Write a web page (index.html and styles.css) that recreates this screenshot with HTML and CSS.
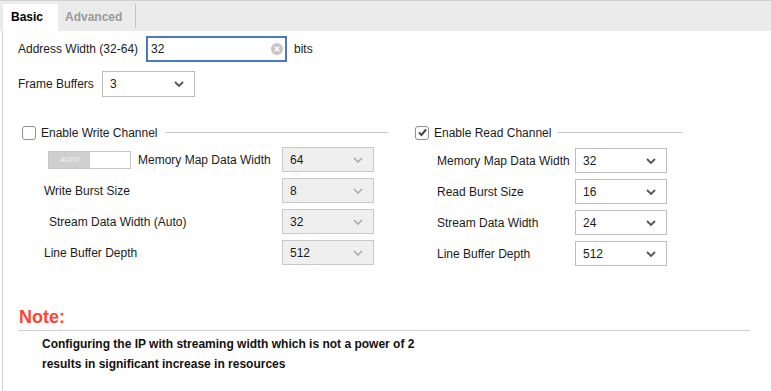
FILE: index.html
```html
<!DOCTYPE html>
<html>
<head lang="en">
    <meta charset="UTF-8">
    <title>Basic</title>
    <link rel="stylesheet" href="styles.css">
</head>
<body>
<div class="tabs">
    <div class="tab active">Basic</div>
    <div class="tab">Advanced</div>
    <span class="tab_sep"></span>
</div>
<div class="panel">
    <div class="row addr_row">
        <label class="addr_label">Address Width (32-64)</label>
        <div class="text_input">
            <span>32</span>
            <svg class="clear" width="12" height="12" viewBox="0 0 12 12">
                <circle cx="6" cy="6" r="6" fill="#c6c6c6"/>
                <path d="M3.8 3.8 L8.2 8.2 M8.2 3.8 L3.8 8.2" stroke="#fff" stroke-width="1.6"/>
            </svg>
        </div>
        <span class="unit">bits</span>
    </div>
    <div class="row fb_row">
        <label class="fb_label">Frame Buffers</label>
        <div class="select fb_select">
            <span>3</span>
            <svg class="chev" width="10" height="6" viewBox="0 0 10 6"><path d="M1 1 L5 5 L9 1" fill="none" stroke="#555" stroke-width="1.8"/></svg>
        </div>
    </div>

    <div class="channels">
        <div class="group write">
            <div class="group_head">
                <span class="check"></span>
                <span>Enable Write Channel</span>
                <span class="rule"></span>
            </div>
            <div class="fields">
                <div class="field">
                    <div class="field_label">
                        <span class="toggle"><span class="toggle_auto">AUTO</span></span>
                        Memory Map Data Width
                    </div>
                    <div class="select disabled"><span>64</span><svg class="chev" width="10" height="6" viewBox="0 0 10 6"><path d="M1 1 L5 5 L9 1" fill="none" stroke="#aaa" stroke-width="1.6"/></svg></div>
                </div>
                <div class="field">
                    <div class="field_label">Write Burst Size</div>
                    <div class="select disabled"><span>8</span><svg class="chev" width="10" height="6" viewBox="0 0 10 6"><path d="M1 1 L5 5 L9 1" fill="none" stroke="#aaa" stroke-width="1.6"/></svg></div>
                </div>
                <div class="field">
                    <div class="field_label indent">Stream Data Width (Auto)</div>
                    <div class="select disabled"><span>32</span><svg class="chev" width="10" height="6" viewBox="0 0 10 6"><path d="M1 1 L5 5 L9 1" fill="none" stroke="#aaa" stroke-width="1.6"/></svg></div>
                </div>
                <div class="field">
                    <div class="field_label">Line Buffer Depth</div>
                    <div class="select disabled"><span>512</span><svg class="chev" width="10" height="6" viewBox="0 0 10 6"><path d="M1 1 L5 5 L9 1" fill="none" stroke="#aaa" stroke-width="1.6"/></svg></div>
                </div>
            </div>
        </div>

        <div class="group read">
            <div class="group_head">
                <span class="check checked">
                    <svg width="11" height="11" viewBox="0 0 11 11"><path d="M2 5.5 L4.5 8 L9 2.5" fill="none" stroke="#444" stroke-width="2"/></svg>
                </span>
                <span>Enable Read Channel</span>
                <span class="rule"></span>
            </div>
            <div class="fields">
                <div class="field">
                    <div class="field_label">Memory Map Data Width</div>
                    <div class="select"><span>32</span><svg class="chev" width="10" height="6" viewBox="0 0 10 6"><path d="M1 1 L5 5 L9 1" fill="none" stroke="#555" stroke-width="1.8"/></svg></div>
                </div>
                <div class="field">
                    <div class="field_label">Read Burst Size</div>
                    <div class="select"><span>16</span><svg class="chev" width="10" height="6" viewBox="0 0 10 6"><path d="M1 1 L5 5 L9 1" fill="none" stroke="#555" stroke-width="1.8"/></svg></div>
                </div>
                <div class="field">
                    <div class="field_label">Stream Data Width</div>
                    <div class="select"><span>24</span><svg class="chev" width="10" height="6" viewBox="0 0 10 6"><path d="M1 1 L5 5 L9 1" fill="none" stroke="#555" stroke-width="1.8"/></svg></div>
                </div>
                <div class="field">
                    <div class="field_label">Line Buffer Depth</div>
                    <div class="select"><span>512</span><svg class="chev" width="10" height="6" viewBox="0 0 10 6"><path d="M1 1 L5 5 L9 1" fill="none" stroke="#555" stroke-width="1.8"/></svg></div>
                </div>
            </div>
        </div>
    </div>

    <div class="note">
        <h2 class="note_title">Note:</h2>
        <p class="note_text">Configuring the IP with streaming width which is not a power of 2<br>
            results in significant increase in resources</p>
    </div>
</div>
</body>
</html>
```

FILE: styles.css
```css
 *{
     margin: 0;
     padding: 0;
     box-sizing: border-box;
 }
 body{
     font-family: "Liberation Sans", Arial, sans-serif;
     font-size: 12px;
     color: #1b1b1b;
     background: #fff;
 }
 /* tab strip */
 .tabs{
     display: flex;
     align-items: flex-end;
     height: 31px;
     background: #ebebeb;
     border-top: 1px solid #d2d2d2;
     padding-left: 3px;
 }
 .tab{
     height: 27px;
     line-height: 27px;
     font-weight: bold;
     color: #9a9a9a;
 }
 .tab.active{
     width: 55px;
     padding-left: 8px;
     background: #fff;
     color: #000;
 }
 .tab:nth-child(2){
     width: 77px;
     padding-left: 7px;
 }
 .tab_sep{
     width: 1px;
     height: 24px;
     margin-bottom: 3px;
     background: #c4c4c4;
 }
 /* panel */
 .panel{
     margin-left: 2px;
     border-left: 1px solid #d2d2d2;
     padding: 0 21px 26px 15px;
 }
 .row{
     display: flex;
     align-items: center;
 }
 .addr_row{
     padding-top: 5px;
 }
 .addr_label{
     width: 128px;
 }
 .text_input{
     display: flex;
     align-items: center;
     justify-content: space-between;
     width: 141px;
     height: 26px;
     border: 2px solid #4a78c4;
     padding: 0 2px 0 3px;
 }
 .unit{
     margin-left: 7px;
 }
 .fb_row{
     margin-top: 9px;
 }
 .fb_label{
     width: 84px;
 }
 .select{
     display: flex;
     align-items: center;
     justify-content: space-between;
     width: 92px;
     height: 25px;
     border: 1px solid #bdbdbd;
     background: #fff;
     padding: 0 10px 0 7px;
 }
 .select.disabled{
     background: #efefef;
     border-color: #c9c9c9;
 }
 .fb_select{
     height: 26px;
     width: 93px;
 }
 /* channels */
 .channels{
     display: flex;
     margin-top: 28px;
 }
 .group_head{
     display: flex;
     align-items: center;
     height: 15px;
 }
 .check{
     display: flex;
     align-items: center;
     justify-content: center;
     width: 14px;
     height: 14px;
     border: 1px solid #8e8e8e;
     border-radius: 3px;
     margin-right: 5px;
 }
 .rule{
     flex: 1;
     height: 1px;
     background: #c9c9c9;
     margin-left: 7px;
 }
 .write{
     width: 366px;
     margin-left: 4px;
 }
 .read{
     width: 268px;
     margin-left: 27px;
 }
 .fields{
     padding-left: 22px;
     margin-top: 7px;
 }
 .read .fields{
     margin-top: 8px;
 }
 .field{
     display: flex;
     align-items: center;
     height: 25px;
     margin-bottom: 6px;
 }
 .field_label{
     display: flex;
     align-items: center;
 }
 .write .field_label{
     width: 238px;
 }
 .read .field_label{
     width: 138px;
 }
 .field_label.indent{
     padding-left: 5px;
 }
 .toggle{
     display: flex;
     width: 83px;
     height: 18px;
     margin-left: 4px;
     margin-right: 7px;
     border: 1px solid #c6c6c6;
     background: #fff;
 }
 .toggle_auto{
     width: 41px;
     background: #cfcfcf;
     color: #ececec;
     font-size: 7px;
     font-weight: bold;
     line-height: 16px;
     text-align: center;
 }
 /* note */
 .note{
     margin-top: 35px;
 }
 .note_title{
     font-size: 18px;
     line-height: 20px;
     color: #fb4632;
     padding: 0 0 3px 1px;
     border-bottom: 1px solid #cfcfcf;
 }
 .note_text{
     margin-top: 3px;
     padding-left: 24px;
     font-weight: bold;
     line-height: 20px;
     color: #111;
 }
```
